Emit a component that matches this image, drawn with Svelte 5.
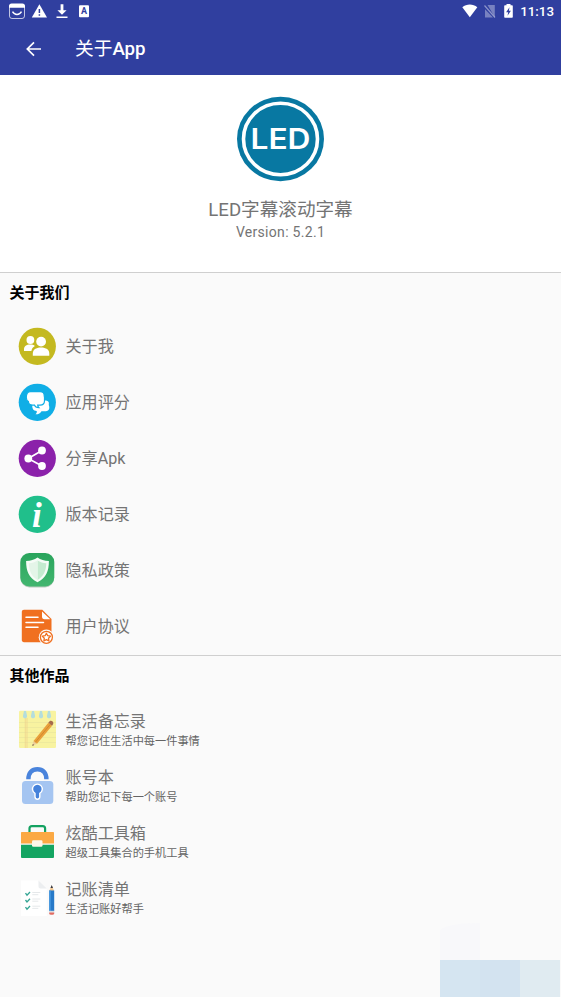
<script lang="ts">
  type Item = {
    icon: string;
    title: string;
    desc?: string;
  };

  const aboutItems: Item[] = [
    { icon: 'people', title: '关于我' },
    { icon: 'chat', title: '应用评分' },
    { icon: 'share', title: '分享Apk' },
    { icon: 'info', title: '版本记录' },
    { icon: 'shield', title: '隐私政策' },
    { icon: 'document', title: '用户协议' }
  ];

  const otherApps: Item[] = [
    { icon: 'notepad', title: '生活备忘录', desc: '帮您记住生活中每一件事情' },
    { icon: 'lock', title: '账号本', desc: '帮助您记下每一个账号' },
    { icon: 'toolbox', title: '炫酷工具箱', desc: '超级工具集合的手机工具' },
    { icon: 'checklist', title: '记账清单', desc: '生活记账好帮手' }
  ];
</script>

{#snippet itemIcon(name: string)}
  <svg class="item_icon" viewBox="0 0 38 38">
    {#if name === 'people'}
      <circle cx="19.3" cy="19.3" r="18.6" fill="#c4b920" />
      <g fill="#fff">
        <circle cx="12.4" cy="13" r="3.9" />
        <path d="M6 24v-1.6c0-3.2 2.3-4.9 6.2-4.9 2 0 3.6.5 4.7 1.4-2 1.1-3.2 2.8-3.5 5.1z" />
        <circle cx="23.1" cy="14.6" r="4.9" />
        <path d="M14.8 28.8v-2c0-4.2 3-6.3 8.2-6.3s8.3 2.1 8.3 6.3v2z" />
      </g>
    {:else if name === 'chat'}
      <circle cx="19.3" cy="19.3" r="18.6" fill="#10aee6" />
      <path fill="#fff" d="M24 17.5h4c2.300.2 3.300 1.700 2.800 3.700-.2 1 .4 1.600.5 2.800.2 2.600-1 4-3.300 4.200h-4.500c-1 2-2.700 3.100-6 3.100 1.200-1 1.500-2 1.200-3.200-3.400-.4-4.700-2.500-4.400-6.600z" />
      <path fill="#fff" stroke="#10aee6" stroke-width="1.200" d="M12.500 8.700h9.700c2.800 0 4 1.300 4 3.800 0 1 .5 1.600.3 3v2.200c0 3-1.500 4.400-4.500 4.400h-2.300c.1 1 .4 1.700 1.200 2.500-2.600 0-3.900-.8-4.400-2.500h-2c-2.800 0-4.100-1.200-4.100-3.500-1.500-.9-2.100-2-2.100-4 0-4 1.200-5.900 4.200-5.900z" />
    {:else if name === 'share'}
      <circle cx="19.300" cy="19.300" r="18.600" fill="#8b21aa" />
      <path d="M24 11.500 10.200 19.500 24 27" fill="none" stroke="#fff" stroke-width="1.700" />
      <g fill="#fff">
        <circle cx="24" cy="11.500" r="3.900" />
        <circle cx="10.300" cy="19.500" r="3.900" />
        <circle cx="24" cy="27" r="3.900" />
      </g>
    {:else if name === 'info'}
      <circle cx="19.300" cy="19.300" r="18.600" fill="#20bf8b" />
      <text class="info_letter" x="18.900" y="31.500" text-anchor="middle">i</text>
    {:else if name === 'shield'}
      <defs>
        <linearGradient id="shieldBg" x1="0" y1="0" x2="0" y2="1">
          <stop offset="0" stop-color="#29a45c" />
          <stop offset="1" stop-color="#42b66f" />
        </linearGradient>
      </defs>
      <rect x="2.500" y="3.500" width="33.500" height="33" rx="9" fill="#b9c9bd" />
      <rect x="2.300" y="2" width="34" height="33.400" rx="9" fill="url(#shieldBg)" />
      <path d="M19.500 6.500c3 2.100 7 3.300 11.400 3.500 0 10-2.700 17-11.400 21.200C10.800 27 8.100 20 8.100 10c4.400-.2 8.400-1.400 11.400-3.500z" fill="#f6fcf7" />
      <path d="M19.500 9.500c2.700 1.600 5.500 2.500 8.800 2.800-.2 7.500-2.500 13-8.800 16.700z" fill="#c4ebcf" />
      <path d="M19.500 9.500v19.500C13.700 25.500 11 20 10.800 12.300c3.200-.3 6.200-1.200 8.700-2.800z" fill="#e4f5e8" />
    {:else if name === 'document'}
      <path d="M6 2.800h18.300l9.200 9.300v21c0 1.300-.9 2.200-2.200 2.200H6c-1.300 0-2.200-.9-2.200-2.200V5c0-1.300.9-2.200 2.200-2.200z" fill="#f07020" />
      <path d="M24 4.500v5.200c0 1.600.9 2.500 2.500 2.500h5.800z" fill="#fff" />
      <path d="M8 10.300h12M8 15.400h17.500M8 20.300h12" stroke="#fff" stroke-width="1.500" stroke-linecap="round" />
      <circle cx="28.400" cy="30.300" r="7.700" fill="#fafafa" />
      <circle cx="28.400" cy="30.300" r="6" fill="#fff" stroke="#f07020" stroke-width="1.300" />
      <path d="m28.400 26.300 1.300 2.400 2.700.5-1.900 2 .4 2.700-2.500-1.200-2.500 1.200.4-2.700-1.900-2 2.700-.5z" fill="#fff" stroke="#f07020" stroke-width="1.300" stroke-linejoin="round" />
    {:else if name === 'notepad'}
      <rect x="1" y=".8" width="37" height="37.200" rx="1.200" fill="#f8f3a0" />
      <path d="M1 12.500h37M1 17.500h37M1 22.500h37M1 27.500h37M1 32.500h37" stroke="#ebe79d" stroke-width=".8" />
      <path d="M7.300 8v30M9 8v30" stroke="#efcf8b" stroke-width=".7" />
      <g fill="#b4dddd">
        <path d="M6 1h2l1 4.500a2.100 2.100 0 1 1-4 0z" />
        <path d="M14 1h2l1 4.500a2.100 2.100 0 1 1-4 0z" />
        <path d="M22 1h2l1 4.500a2.100 2.100 0 1 1-4 0z" />
        <path d="M30 1h2l1 4.500a2.100 2.100 0 1 1-4 0z" />
      </g>
      <path d="m14.300 36 1.200-5 3.500 2.700z" fill="#edcf9b" />
      <path d="m14.300 36 .5-2 1.300 1z" fill="#65513e" />
      <path d="m15.500 31 14.800-18.200 3.800 3L19 33.700z" fill="#e9a13b" />
      <path d="m17.300 32.300 15-18" stroke="#d28a2e" stroke-width="1" />
      <path d="m30.300 12.800 1.300-1.600c1.600-1.500 4.500.6 3.600 2.800l-1.100 1.800z" fill="#a66b4c" />
    {:else if name === 'lock'}
      <path d="M10.400 13.300c0-6.500 3.600-10 9-10s9 3.500 9 10" fill="none" stroke="#4a84dc" stroke-width="4.400" />
      <rect x="4" y="15" width="31.300" height="23" rx="3.500" fill="#a5c5f1" />
      <path d="M17 27.300a4.900 4.900 0 1 1 4.800 0v3.500a2.400 2.400 0 0 1-4.800 0z" fill="#4582db" stroke="#fff" stroke-width="1.400" />
    {:else if name === 'toolbox'}
      <path d="M11.500 11V6.500c0-1.600.8-2.400 2.400-2.400h10.800c1.600 0 2.400.8 2.400 2.400V11" fill="none" stroke="#14a261" stroke-width="2.200" />
      <path d="M4 10h31c.7 0 1 .3 1 1v10.500H3V11c0-.7.300-1 1-1z" fill="#fba944" />
      <path d="M3 22.700h33v12c0 .8-.5 1.300-1.300 1.300H4.300C3.500 36 3 35.500 3 34.700z" fill="#14a562" />
      <rect x="14" y="18.300" width="10.500" height="6.500" rx="1.300" fill="#fff6e9" />
    {:else}
      <path d="M3 2.500h17.500l8.300 8V38H3z" fill="#fff" />
      <path d="M20.500 2.500v6c0 1.300.7 2 2 2h6.300z" fill="#eceef0" />
      <path d="M14.300 14.500h8M14.300 16.700h6M14.300 21h8M14.300 23.200h6M14.300 28.200h8M14.300 30.400h6" stroke="#e2e5e8" stroke-width=".9" />
      <path d="m7.500 15.200 1.500 2 3-3.200M7.500 22 9 24l3-3.200M7.500 29.200l1.500 2 3-3.200" fill="none" stroke="#35a594" stroke-width="1.300" />
      <path d="m31.200 13 2.500-5.700 2.500 5.700z" fill="#efc793" />
      <path d="m32.500 10 1.200-3 1.300 3z" fill="#343846" />
      <path d="M31.200 12.500h5V33h-5z" fill="#2779c8" />
      <path d="M31.200 12.500h1.500V33h-1.500z" fill="#4a9be2" />
      <path d="M31.200 32.800h5v1.800h-5z" fill="#d9dcdf" />
      <path d="M31.200 34.500h5v1.200c0 1.500-5 1.500-5 0z" fill="#e26b62" />
    {/if}
  </svg>
{/snippet}

{#snippet section(heading: string, items: Item[])}
  <section class="section">
    <h2 class="section_title">{heading}</h2>
    {#each items as item}
      <div class="item">
        {@render itemIcon(item.icon)}
        <div class="item_text">
          <span class="item_title">{item.title}</span>
          {#if item.desc}
            <span class="item_desc">{item.desc}</span>
          {/if}
        </div>
      </div>
    {/each}
  </section>
{/snippet}

<div class="screen">
  <header class="appbar">
    <div class="statusbar">
      <svg width="92" height="22" viewBox="0 0 92 22">
        <rect x="9.500" y="4.500" width="15" height="14" rx="2.500" fill="none" stroke="#fff" stroke-opacity=".7" />
        <path d="M9 7.800V6c0-1.700 1-2.600 2.600-2.600h10.800C24 3.400 25 4.300 25 6v1.800z" fill="#fff" />
        <path d="M12.500 11.700c2 3.700 7 3.700 9 0" fill="none" stroke="#fff" stroke-width="1.400" />
        <path d="M39.400 4.300 47 17.500H31.800z" fill="#fff" />
        <path d="M39.400 9v4M39.400 14.200v1.600" stroke="#303f9f" stroke-width="1.500" />
        <path d="M60.600 4.200h2.800v6h3.200l-4.600 4.500-4.600-4.500h3.200zM56.500 16.500h11v1.600h-11z" fill="#fff" />
        <rect x="79" y="5.300" width="10" height="12" rx="1" fill="#fff" />
        <text class="badge_letter" x="84" y="14" text-anchor="middle">A</text>
      </svg>
      <div class="status_right">
        <svg width="54" height="22" viewBox="0 0 54 22">
          <path d="M.3 7.200c4.200-3.700 10.800-3.700 15 0L7.800 17.300z" fill="#fff" />
          <path d="M25.500 5h7.300v12.300zM23 9.200l8 8.300h-8z" fill="#fff" opacity=".35" />
          <path d="m22.500 5.500 10.500 12" stroke="#fff" stroke-opacity=".45" stroke-width="1.200" />
          <path d="M44.500 4h4v1.300H50c.5 0 .8.300.8.800V17c0 .5-.3.800-.8.800h-7c-.5 0-.8-.3-.8-.8V6.100c0-.5.3-.8.800-.8h1.500z" fill="#fff" />
          <path d="m47.500 7.300-3.400 5h2.100l-.7 3.500 3.400-5h-2z" fill="#303f9f" />
        </svg>
        <span class="clock">11:13</span>
      </div>
    </div>
    <div class="toolbar">
      <svg class="back" width="18" height="18" viewBox="0 0 18 18">
        <path d="M16 9H2.500M9 2.300 2.300 9 9 15.700" fill="none" stroke="#fff" stroke-width="1.700" />
      </svg>
      <h1 class="page_title"><span class="page_title_cjk">关于</span>App</h1>
    </div>
  </header>

  <div class="hero">
    <svg class="logo" width="88" height="86" viewBox="0 0 88 86">
      <ellipse cx="43.500" cy="43" rx="43.500" ry="42.200" fill="#0878a2" />
      <ellipse cx="43.500" cy="43" rx="37" ry="35.800" fill="none" stroke="#fff" stroke-width="3.600" />
      <text class="logo_text" x="13.500" y="53.400" textLength="60" lengthAdjust="spacingAndGlyphs">LED</text>
    </svg>
    <div class="app_name">LED字幕滚动字幕</div>
    <div class="version">Version: 5.2.1</div>
  </div>

  {@render section('关于我们', aboutItems)}
  {@render section('其他作品', otherApps)}

  <!-- 右下角半透明色块 -->
  <div class="corner">
    <div class="corner_shade"></div>
    <div class="corner_blocks">
      <i></i>
      <i></i>
      <i></i>
    </div>
  </div>
</div>

<style>
  :global(body) {
    margin: 0;
    background: #fafafa;
  }

  .screen {
    position: relative;
    width: 561px;
    height: 997px;
    overflow: hidden;
    background: #fafafa;
    color: #747474;
    font-family: Roboto, 'Noto Sans CJK SC', sans-serif;
  }

  .appbar {
    height: 75px;
    background: #303f9f;
    color: #fff;
  }

  .statusbar {
    display: flex;
    justify-content: space-between;
    height: 23px;
  }

  .status_right {
    display: flex;
    padding-right: 7px;
  }

  .clock {
    width: 35px;
    margin-left: 3px;
    font-size: 13.3px;
    font-weight: 500;
    line-height: 24px;
    text-align: right;
    white-space: nowrap;
  }

  .badge_letter {
    font-size: 9px;
    font-weight: 700;
    fill: #303f9f;
  }

  .toolbar {
    display: flex;
    align-items: center;
    height: 52px;
    padding-left: 25px;
  }

  .page_title {
    margin: 0 0 0 32px;
    font-size: 18.7px;
    font-weight: 500;
    line-height: 28px;
  }

  .page_title_cjk {
    font-weight: 400;
  }

  .hero {
    display: flex;
    flex-direction: column;
    align-items: center;
    box-sizing: border-box;
    height: 197px;
    padding-top: 21px;
    background: #fff;
  }

  .logo_text {
    font-family: Inter, sans-serif;
    font-size: 28px;
    font-weight: 600;
    fill: #fff;
  }

  .app_name {
    margin-top: 14px;
    font-size: 18.6px;
    line-height: 28px;
  }

  .version {
    font-size: 14px;
    line-height: 17px;
    letter-spacing: 0.3px;
  }

  .section {
    border-top: 1px solid #cfcfcf;
  }

  .section_title {
    margin: 0;
    padding: 0 0 5px 9.5px;
    font-size: 15px;
    font-weight: 700;
    line-height: 41px;
    height: 40px;
    color: #000;
  }

  .item {
    display: flex;
    align-items: center;
    height: 56px;
    padding-left: 18px;
  }

  .section:first-of-type .item:last-child {
    margin-bottom: 1px;
  }

  .item_icon {
    width: 38px;
    height: 38px;
    margin-right: 9.5px;
    flex: none;
  }

  .info_letter {
    font-family: 'Liberation Serif', serif;
    font-size: 35px;
    font-weight: 700;
    font-style: italic;
    fill: #fff;
  }

  .item_text {
    display: flex;
    flex-direction: column;
    padding-top: 2px;
  }

  .item_title {
    font-size: 16.1px;
    line-height: 22px;
  }

  .item_desc {
    font-size: 11.2px;
    line-height: 17px;
    color: #646464;
  }

  .corner {
    position: absolute;
    right: 1px;
    bottom: 0;
    width: 120px;
  }

  .corner_shade {
    width: 40px;
    height: 37px;
    background: #f8f8fa;
    border-top-left-radius: 40px 8px;
  }

  .corner_blocks {
    display: flex;
    height: 37px;
  }

  .corner_blocks i {
    flex: 1;
    background: #d5e5f1;
  }

  .corner_blocks i:nth-child(2) {
    background: #d3e3f0;
  }

  .corner_blocks i:nth-child(3) {
    background: #e0ebf1;
  }
</style>
